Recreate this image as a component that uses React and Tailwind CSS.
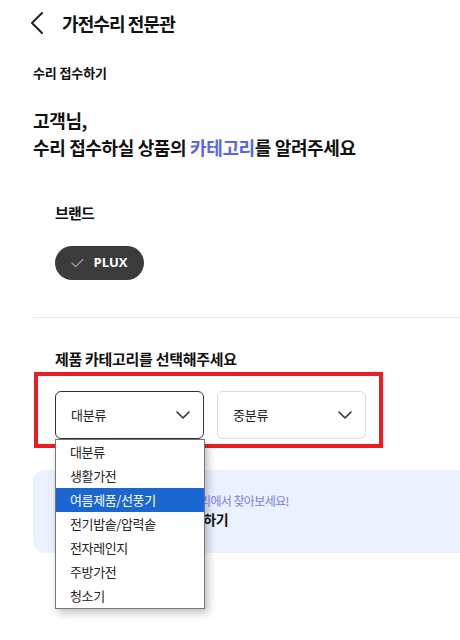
import React, { useState } from "react";

const BIG_CATEGORIES = [
  "대분류",
  "생활가전",
  "여름제품/선풍기",
  "전기밥솥/압력솥",
  "전자레인지",
  "주방가전",
  "청소기",
];

function Chevron({ className }) {
  return (
    <svg viewBox="0 0 14 8" className={className} fill="none">
      <path d="M1 1l6 6 6-6" stroke="#333" strokeWidth="1.6" strokeLinecap="round" strokeLinejoin="round" />
    </svg>
  );
}

function SelectBox({ label, active }) {
  return (
    <div
      className={`flex h-[48px] w-[149px] items-center justify-between rounded-[6px] border bg-white pl-[15px] pr-[13px] text-[13px] tracking-[-0.02em] text-[#222] ${
        active ? "border-[#333]" : "border-[#dcdcdc]"
      }`}
    >
      <span>{label}</span>
      <Chevron className="h-[8px] w-[14px]" />
    </div>
  );
}

export default function App() {
  const [selected] = useState(2);

  return (
    <div
      className="relative h-[640px] w-[460px] overflow-hidden bg-white text-[#111]"
      style={{ fontFamily: '"Noto Sans CJK KR", "Noto Sans", sans-serif' }}
    >
      {/* Header */}
      <div className="flex h-[46px] items-center pl-[31px]">
        <svg viewBox="0 0 12 22" className="h-[22px] w-[12px]" fill="none">
          <path d="M11 1L1 11l10 10" stroke="#222" strokeWidth="2" strokeLinecap="round" strokeLinejoin="round" />
        </svg>
        <h1 className="ml-[19px] text-[18px] font-bold tracking-[-0.05em]">가전수리 전문관</h1>
      </div>

      <div className="pl-[33px]">
        <p className="mt-[17px] text-[13px] font-bold tracking-[-0.01em]">수리 접수하기</p>

        <h2 className="mt-[24px] text-[18px] font-bold leading-[27px] tracking-[-0.02em]">
          고객님,
          <br />
          수리 접수하실 상품의 <span className="text-[#5865f2]">카테고리</span>를 알려주세요
        </h2>

        {/* Brand */}
        <div className="pl-[22px]">
          <p className="mt-[41px] text-[15px] font-bold tracking-[-0.05em]">브랜드</p>
          <div className="mt-[22px] flex h-[34px] w-[89px] items-center justify-center gap-[9px] rounded-full bg-[#3b3b3b]">
            <svg viewBox="0 0 14 10" className="h-[10px] w-[13px]" fill="none">
              <path d="M1 5l4 4 8-8" stroke="#aaa" strokeWidth="1.2" strokeLinecap="round" strokeLinejoin="round" />
            </svg>
            <span className="text-[13px] font-bold text-white" style={{ fontFamily: '"Open Sans", "Noto Sans", sans-serif' }}>
              PLUX
            </span>
          </div>
        </div>

        <div className="mt-[37px] h-px bg-[#e6e6e6]" />

        {/* Category */}
        <p className="mt-[30px] pl-[22px] text-[15px] font-bold tracking-[-0.02em]">제품 카테고리를 선택해주세요</p>

        <div className="relative ml-[22px] mt-[20px] flex gap-[13px]">
          <SelectBox label="대분류" active />
          <SelectBox label="중분류" />

          <div className="pointer-events-none absolute -left-[21px] -top-[19px] h-[76px] w-[349px] border-[4px] border-[#ec1c24]" />

          {/* Open dropdown of the first select */}
          <ul className="absolute left-0 top-full z-10 w-[150px] overflow-hidden border border-[#767676] bg-white shadow-[3px_4px_8px_rgba(0,0,0,0.25)]">
            {BIG_CATEGORIES.map((item, i) => (
              <li
                key={item}
                className={`flex h-[24px] items-center pl-[14px] text-[13px] tracking-[-0.03em] ${
                  i === selected ? "bg-[#1a67d2] text-white" : "text-[#222]"
                }`}
              >
                {item}
              </li>
            ))}
          </ul>
        </div>

        <div className="mr-[-40px] mt-[31px] rounded-[12px] bg-[#ebf1fe] pb-[24px] pl-[25px] pt-[22px]">
          <p className="text-[12px] leading-[17px] tracking-[-0.05em] text-[#7a7cf5]">
            찾으시는 제품이 없다면 카테고리에서 찾아보세요!
          </p>
          <p className="text-[14px] font-bold leading-[20px] tracking-[-0.03em]">제품명 직접 입력하여 접수하기</p>
        </div>
      </div>
    </div>
  );
}
